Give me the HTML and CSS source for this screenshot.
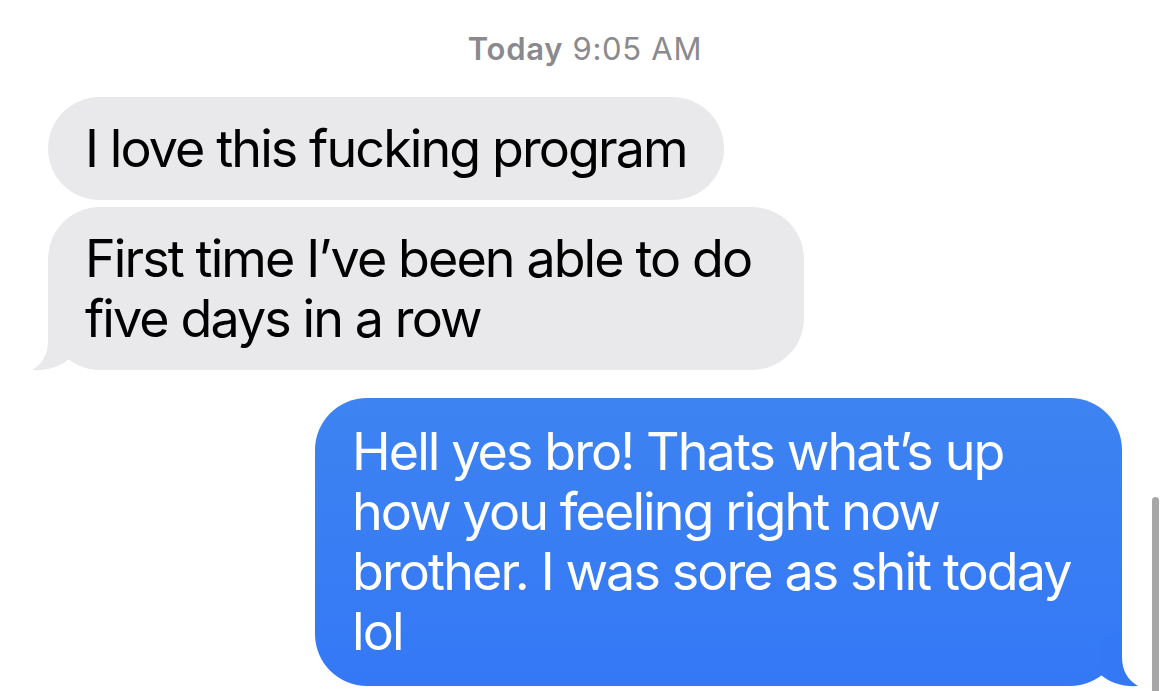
FILE: index.html
```html
<!DOCTYPE html>
<html lang="en">
<head>
    <meta charset="UTF-8">
    <meta name="viewport" content="width=device-width, initial-scale=1.0">
    <title>Messages</title>
    <link rel="stylesheet" href="styles.css">
</head>
<body>
    <div class="thread">
        <div class="timestamp"><b>Today</b> 9:05 AM</div>

        <div class="bubble received">I love this fucking program</div>
        <div class="bubble received last wide">
            First time I’ve been able to do<br>five days in a row
            <svg class="tail tail-left" width="46" height="56" viewBox="0 0 46 56"><path d="M19 0 L19 27 C19 41 13 50 3 56 C17 57 31 53 40 45 L41 10 Z" fill="#e9e9eb"/></svg>
        </div>

        <div class="bubble sent last">
            Hell yes bro! Thats what’s up<br>how you feeling right now<br>brother. I was sore as shit today<br>lol
            <svg class="tail tail-right" width="46" height="56" viewBox="0 0 46 56"><path d="M27 0 L27 27 C27 41 33 50 43 56 C29 57 15 53 6 45 L5 10 Z" fill="#3478f6"/></svg>
        </div>
    </div>

    <!-- scroll indicator -->
    <div class="scroll-indicator"></div>
</body>
</html>
```

FILE: styles.css
```css
body {
    margin: 0;
    background: #fff;
    font-family: Inter, "Liberation Sans", sans-serif;
    overflow: hidden;
}

.thread {
    display: flex;
    flex-direction: column;
    align-items: flex-start;
    padding: 31px 48px 0;
}

.timestamp {
    align-self: center;
    font-size: 31px;
    line-height: 36px;
    letter-spacing: 0.7px;
    color: #8a8a8e;
    margin-bottom: 30px;
}

.timestamp b {
    font-weight: 600;
}

.bubble {
    position: relative;
    font-size: 52px;
    line-height: 60px;
    letter-spacing: -1.9px;
    white-space: nowrap;
    padding: 21.5px 37px;
    border-radius: 52px;
    margin-bottom: 7px;
}

.received {
    background: #e9e9eb;
    color: #000;
}

.received.wide {
    box-sizing: border-box;
    width: 756px;
}

.received.last {
    margin-bottom: 28px;
}

.sent {
    align-self: flex-end;
    box-sizing: border-box;
    width: 807px;
    padding: 24px 37px;
    background: linear-gradient(#3e83f1, #3478f6);
    color: #fff;
}

.tail {
    position: absolute;
    bottom: 0;
    overflow: visible;
}

.tail-left {
    left: -19px;
}

.tail-right {
    right: -19px;
}

.scroll-indicator {
    position: absolute;
    left: 1152px;
    top: 497px;
    width: 7px;
    height: 200px;
    border-radius: 4px;
    background: #a7a7a7;
}
```
